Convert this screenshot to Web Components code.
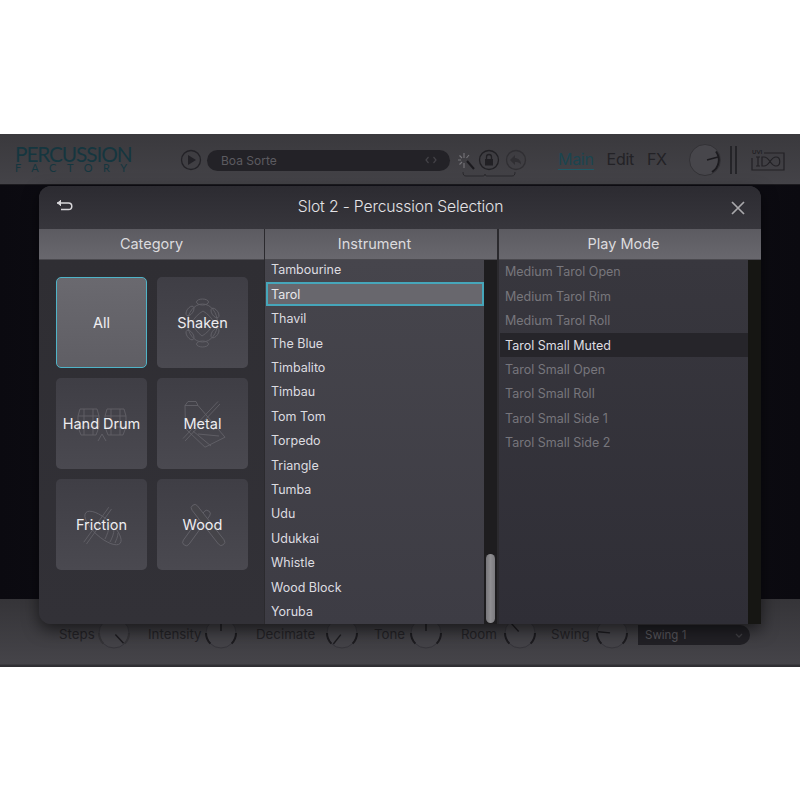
<!DOCTYPE html>
<html lang="en">
<head>
<meta charset="utf-8">
<title>Percussion Factory</title>
<style>
  html, body { margin: 0; padding: 0; background: #fff; }
  body { font-family: Inter, "Liberation Sans", sans-serif; }
</style>
</head>
<body>
<plugin-window>
  <top-bar slot="top"></top-bar>
  <bottom-bar slot="bottom">
    <knob-control label="Steps" label-w="38" angle="137" faint></knob-control>
    <knob-control label="Intensity" label-w="56" angle="0"></knob-control>
    <knob-control label="Decimate" label-w="69" angle="-142"></knob-control>
    <knob-control label="Tone" label-w="35" angle="0"></knob-control>
    <knob-control label="Room" label-w="42" angle="-42"></knob-control>
    <knob-control label="Swing" label-w="44" angle="-85"></knob-control>
    <swing-select>Swing 1</swing-select>
  </bottom-bar>
  <selection-dialog slot="dialog" heading="Slot 2 - Percussion Selection">
    <dialog-column slot="category" heading="Category" kind="category">
      <category-tile selected>All</category-tile>
      <category-tile icon="shaken">Shaken</category-tile>
      <category-tile icon="hand">Hand Drum</category-tile>
      <category-tile icon="metal">Metal</category-tile>
      <category-tile icon="friction">Friction</category-tile>
      <category-tile icon="wood">Wood</category-tile>
    </dialog-column>
    <dialog-column slot="instrument" heading="Instrument" kind="instrument" thumb>
      <list-row>Tambourine</list-row>
      <list-row outlined>Tarol</list-row>
      <list-row>Thavil</list-row>
      <list-row>The Blue</list-row>
      <list-row>Timbalito</list-row>
      <list-row>Timbau</list-row>
      <list-row>Tom Tom</list-row>
      <list-row>Torpedo</list-row>
      <list-row>Triangle</list-row>
      <list-row>Tumba</list-row>
      <list-row>Udu</list-row>
      <list-row>Udukkai</list-row>
      <list-row>Whistle</list-row>
      <list-row>Wood Block</list-row>
      <list-row>Yoruba</list-row>
    </dialog-column>
    <dialog-column slot="mode" heading="Play Mode" kind="mode">
      <list-row dim>Medium Tarol Open</list-row>
      <list-row dim>Medium Tarol Rim</list-row>
      <list-row dim>Medium Tarol Roll</list-row>
      <list-row active>Tarol Small Muted</list-row>
      <list-row dim>Tarol Small Open</list-row>
      <list-row dim>Tarol Small Roll</list-row>
      <list-row dim>Tarol Small Side 1</list-row>
      <list-row dim>Tarol Small Side 2</list-row>
    </dialog-column>
  </selection-dialog>
</plugin-window>

<script>
// main frame: the plugin behind, the dialog lies over it
class PluginWindow extends HTMLElement {
  connectedCallback() {
    this.attachShadow({ mode: 'open' });
    this.shadowRoot.innerHTML = `
      <style>
        :host { display: flex; flex-direction: column; position: relative; height: 533px; margin-top: 134px; overflow: hidden; }
        .middle { flex: 1; background: linear-gradient(90deg, #0b0a10, #14131b 50%, #0b0a10); }
        .over { position: absolute; left: 39px; top: 52px; }
      </style>
      <slot name="top"></slot>
      <div class="middle"></div>
      <slot name="bottom"></slot>
      <div class="over"><slot name="dialog"></slot></div>
    `;
  }
}

class TopBar extends HTMLElement {
  connectedCallback() {
    this.attachShadow({ mode: 'open' });
    this.shadowRoot.innerHTML = `
      <style>
        :host { display: flex; align-items: center; height: 51px; box-sizing: border-box; padding: 0 15px;
          background: linear-gradient(#3a393d, #444348); color: #1f1e22; box-shadow: inset 0 -1px #1c1b1f; }
        .logo { display: flex; flex-direction: column; flex: none; width: 118px; color: #15363f; font-family: Lato, sans-serif; margin: -3px 47px 0 0; }
        .logo b { font-weight: 400; font-size: 20.800px; line-height: 18px; white-space: nowrap; letter-spacing: -1.100px; }
        .logo i { font-style: normal; font-size: 11px; line-height: 9px; letter-spacing: 10.600px; white-space: nowrap; }
        svg { display: block; flex: none; }
        .pill { width: 243px; height: 21px; border-radius: 11px; background: #232227; margin: 1px 7px 0 5px; display: flex; align-items: center;
          justify-content: space-between; padding: 0 13px 0 14px; box-sizing: border-box; font-size: 12px; color: #5c5b60; }
        .tabs { display: flex; gap: 13px; margin-left: 31px; font-size: 16px; letter-spacing: -.3px; color: #232226; }
        .tabs span { line-height: 18px; padding-bottom: 1px; }
        .tabs span:first-child { color: #1b4550; border-bottom: 1px solid #1e5a66; }
        .vol { margin-left: auto; }
        .bars { margin-left: 8px; }
        .uvi { margin-left: 13px; }
      </style>
      <div class="logo"><b>PERCUSSION</b><i>FACTORY</i></div>
      <svg width="22" height="22" viewBox="0 0 22 22" fill="none" stroke="#232227" style="margin-top:1px">
        <circle cx="11" cy="11" r="9.500" stroke-width="1.300"/><path d="M8 6l8 5-8 5z" fill="#232227" stroke="none"/>
      </svg>
      <div class="pill"><span>Boa Sorte</span>
        <svg width="12" height="8" viewBox="0 0 12 8" fill="none" stroke="#434247" stroke-width="1.200"><path d="M3.500 1L1 4l2.500 3M8.500 1L11 4 8.500 7"/></svg>
      </div>
      <svg width="70" height="51" viewBox="0 0 70 51" fill="none">
        <path d="M10 27l7 8" stroke="#1b1a1e" stroke-width="2"/>
        <path d="M7 19v5M7 29v5M1 26h3M2.500 21.500L5 24M2.500 30.500L5 28M12 21l-2.500 3" stroke="#77767b" stroke-width="1.100"/>
        <g stroke="#212024">
          <circle cx="32" cy="26" r="9.500" stroke-width="1.300"/>
          <rect x="28" y="25" width="8" height="6.500" fill="#212024" stroke="none"/>
          <path d="M29.500 25v-2a2.500 2.500 0 015 0v2" stroke-width="1.300"/>
        </g>
        <g stroke="#302f33">
          <circle cx="59" cy="26" r="9.500" stroke-width="1.300"/>
          <path d="M58 21l-5 5 5 5v-3c2.500 0 4.500 .5 6 2.500 0-3.500-2-6-6-6.500z" fill="#302f33" stroke="none"/>
        </g>
        <path d="M6 38c0 3 1 4 3 4h17c1.500 0 2-1 2-2 0 1 .5 2 2 2h25c2 0 3-1 3-4" stroke="#29282c"/>
      </svg>
      <div class="tabs"><span>Main</span><span>Edit</span><span>FX</span></div>
      <svg class="vol" width="34" height="34" viewBox="0 0 34 34" fill="none">
        <circle cx="17" cy="17" r="15.500" fill="#47464b" stroke="#333236"/>
        <path d="M28 8.500A14 14 0 0 1 24 29" stroke="#1c1b1f" stroke-width="2"/>
        <path d="M19 17l11-3" stroke="#1c1b1f" stroke-width="1.500"/>
      </svg>
      <svg class="bars" width="8" height="28" viewBox="0 0 8 28" stroke="#1d1c20" stroke-width="1.500"><path d="M1 0v28M6 0v28"/></svg>
      <svg class="uvi" width="34" height="23" viewBox="0 0 34 23" fill="none" stroke="#222125" stroke-width="1.200">
        <path d="M1 10v12h32V5H13"/>
        <path d="M5 9h4M5 18h4M7 9v9M13 9c6 0 6 9 12 9 5 0 5-9 0-9-6 0-6 9-12 9h-2V9z"/>
        <text x="1" y="6" font-size="6" fill="#222125" stroke="none" font-family="Lato, sans-serif" font-weight="700">UVI</text>
      </svg>
    `;
  }
}

class BottomBar extends HTMLElement {
  connectedCallback() {
    this.attachShadow({ mode: 'open' });
    this.shadowRoot.innerHTML = `
      <style>
        :host { display: grid; grid-template-columns: 89px 108px 118px 87px 90px 87px 112px; align-items: start; height: 68px; box-sizing: border-box; padding: 17px 0 0 59px;
          background: linear-gradient(#353438, #454449 95%, #2f2e32 98%); }
      </style>
      <slot></slot>
    `;
  }
}

class KnobControl extends HTMLElement {
  connectedCallback() {
    const angle = Number(this.getAttribute('angle') || 0);
    const faint = this.hasAttribute('faint');
    this.attachShadow({ mode: 'open' });
    this.shadowRoot.innerHTML = `
      <style>
        :host { display: grid; grid-template-columns: ${this.getAttribute('label-w')}px 34px; align-items: center; font-size: 13.300px; color: #232226; }
        span { position: relative; top: 1px; }
        svg { display: block; }
      </style>
      <span>${this.getAttribute('label')}</span>
      <svg width="34" height="34" viewBox="0 0 34 34" fill="none">
        <circle cx="17" cy="17" r="15" fill="#434247" stroke="#35343a"/>
        <path d="M6.400 27.600A15 15 0 0 1 2 17M27.600 27.600A15 15 0 0 0 32 17" stroke="${faint ? '#343337' : '#1c1b1f'}" stroke-width="2"/>
        <path d="M17 15V3" transform="rotate(${angle} 17 17)" stroke="#1c1b1f" stroke-width="1.400"/>
      </svg>
    `;
  }
}

class SwingSelect extends HTMLElement {
  connectedCallback() {
    this.attachShadow({ mode: 'open' });
    this.shadowRoot.innerHTML = `
      <style>
        :host { display: flex; align-items: center; justify-content: space-between; width: 112px; height: 20px; box-sizing: border-box;
          padding: 0 7px 0 7px; margin-top: 9px; font-size: 11.500px; color: #57565b; background: #212025; border-radius: 0 10px 10px 0; }
      </style>
      <slot></slot>
      <svg width="8" height="5" viewBox="0 0 8 5" fill="none" stroke="#3f3e43" stroke-width="1.300"><path d="M1 1l3 3 3-3"/></svg>
    `;
  }
}

class SelectionDialog extends HTMLElement {
  connectedCallback() {
    this.attachShadow({ mode: 'open' });
    this.shadowRoot.innerHTML = `
      <style>
        :host { display: flex; flex-direction: column; width: 722px; height: 438px; border-radius: 12px 12px 0 12px; overflow: hidden;
          background: #2f2e33; color: #e6e5e8; box-shadow: 0 6px 16px rgba(0,0,0,.55); }
        header { display: grid; grid-template-columns: 1fr auto 1fr; align-items: center; flex: none; height: 43px; padding: 0 16px 0 17px; box-sizing: border-box;
          background: linear-gradient(#2c2b31, #37363c); }
        h1 { margin: 0 0 3px; font-size: 15.700px; font-weight: 300; letter-spacing: -.15px; color: #e4e3e6; }
        svg { display: block; }
        .back { margin-bottom: 3px; }
        .close { justify-self: end; }
        .cols { display: flex; flex: 1; min-height: 0; }
      </style>
      <header>
        <svg class="back" width="18" height="14" viewBox="0 0 18 14" fill="none" stroke="#d8d7da" stroke-width="1.500">
          <path d="M1 4h11.500a3.300 3.300 0 010 6.600H5"/><path d="M5 1.200L1.500 4 5 6.800" fill="#d8d7da" stroke-width="1"/>
        </svg>
        <h1>${this.getAttribute('heading')}</h1>
        <svg class="close" width="14" height="14" viewBox="0 0 14 14" stroke="#a9a8ab" stroke-width="1.700"><path d="M1 1l12 12M13 1L1 13"/></svg>
      </header>
      <div class="cols">
        <slot name="category"></slot>
        <slot name="instrument"></slot>
        <slot name="mode"></slot>
      </div>
    `;
  }
}

// one column of the dialog: grey heading, then tiles or a list with its scroll track
class DialogColumn extends HTMLElement {
  connectedCallback() {
    const kind = this.getAttribute('kind');
    this.attachShadow({ mode: 'open' });
    this.shadowRoot.innerHTML = `
      <style>
        :host { display: flex; flex-direction: column; box-sizing: border-box; min-height: 0; }
        :host([kind=category]) { width: 225px; }
        :host([kind=instrument]) { width: 235px; border-left: 1px solid #2b2a2e; border-right: 2px solid #2b2a2e; }
        :host([kind=mode]) { width: 262px; }
        h2 { flex: none; margin: 0; height: 31px; line-height: 30px; text-align: center; font-size: 14.500px; font-weight: 400; box-sizing: border-box;
          color: #dcdbde; background: linear-gradient(#5c5b61, #69686e); box-shadow: inset 0 -1px #4a494e; }
        :host([kind=instrument]) h2, :host([kind=mode]) h2 { padding-right: 13px; }
        .body { flex: 1; min-height: 0; display: flex; position: relative; }
        .tiles { flex: 1; display: grid; grid-template-columns: 91px 91px; grid-auto-rows: 91px; gap: 10px 10px; padding: 17px 0 0 17px;
          align-content: start; background: linear-gradient(#2f2e33, #323137); }
        .list { flex: 1; min-width: 0; overflow: hidden; }
        .inner { display: flex; flex-direction: column; margin-top: -2.400px; }
        :host([kind=instrument]) .list { background: linear-gradient(#46454c, #3d3c44); }
        :host([kind=instrument]) .inner { padding-left: 1px; }
        :host([kind=mode]) .list { background: linear-gradient(#38373e, #2f2e36); }
        :host([kind=mode]) .inner { margin-top: -.300px; padding-left: 1px; }
        .track { flex: none; width: 13px; background: #1e1d1f; box-sizing: border-box; padding-top: 294px; }
        :host([kind=mode]) .track { background: #161613; }
        .thumb { width: 9px; height: 69px; margin-left: 2px; border-radius: 5px; background: linear-gradient(90deg, #77767a, #8f8e91 50%, #7b7a7e); }
      </style>
      <h2>${this.getAttribute('heading')}</h2>
      <div class="body">
        ${kind === 'category'
          ? '<div class="tiles"><slot></slot></div>'
          : `<div class="list"><div class="inner"><slot></slot></div></div>
             <div class="track">${this.hasAttribute('thumb') ? '<div class="thumb"></div>' : ''}</div>`}
      </div>
    `;
  }
}

const TILE_ICONS = {
  shaken: `<ellipse cx="29.500" cy="30" rx="15" ry="19"/>
    <path d="M30 18c5 3 9 7 11 12-3 6-7 10-12 13-4-3-8-8-10-13 2-5 6-9 11-12z"/>
    <ellipse cx="29.500" cy="9" rx="6" ry="3"/><ellipse cx="29.500" cy="51" rx="6" ry="3"/>
    <ellipse cx="17" cy="18" rx="3" ry="5.500" transform="rotate(35 17 18)"/><ellipse cx="42" cy="20" rx="3" ry="5.500" transform="rotate(-35 42 20)"/>
    <ellipse cx="17" cy="42" rx="3" ry="5.500" transform="rotate(-35 17 42)"/><ellipse cx="42" cy="40" rx="3" ry="5.500" transform="rotate(35 42 40)"/>`,
  hand: `<path d="M8 15h17l2 7v11l-3 8H9l-3-8V22zM35 15h17l2 7v11l-3 8H36l-3-8V22z"/>
    <path d="M12 15v26M21 15v26M39 15v26M48 15v26M6 22h21M6 33h21M33 22h21M33 33h21M30 40l-4 7M30 40l4 7"/>`,
  metal: `<path d="M10 44.500L45 7.500M12 47l35-37"/><path d="M12 11.500l3-4h8l2 4 27 31.700-20 10-19.500-18.500zM12 11.500h13M20 37l18 15M25 40l21 2"/>`,
  friction: `<path d="M11.800 47.200L36.800 12.200M14.500 49L39.500 14"/>
    <ellipse cx="31" cy="33" rx="23" ry="9" transform="rotate(42 31 33)"/>
    <path d="M33 44c2-4 4-9 4-14M38 47c2-4 4-8 4-13M43 48c1-3 3-6 3-10"/>`,
  wood: `<rect x="-3.500" y="-21" width="7" height="42" rx="3.500" transform="translate(23.500 33) rotate(36)"/>
    <rect x="-3.500" y="-25" width="7" height="50" rx="3.500" fill="#454449" transform="translate(35 30) rotate(-38)"/>`
};

class CategoryTile extends HTMLElement {
  connectedCallback() {
    const icon = TILE_ICONS[this.getAttribute('icon')] || '';
    this.attachShadow({ mode: 'open' });
    this.shadowRoot.innerHTML = `
      <style>
        :host { display: flex; position: relative; align-items: center; justify-content: center; box-sizing: border-box; border-radius: 5px;
          font-size: 14.500px; color: #eeedf0; white-space: nowrap; background: linear-gradient(#3f3e45, #4a4950); }
        :host([selected]) { background: linear-gradient(#6a696f, #5f5e64); border: 1.500px solid #4fb4c8; color: #f0eff2; }
        svg { position: absolute; left: 15.500px; top: 15.500px; }
        span { position: relative; }
      </style>
      ${icon ? `<svg width="60" height="60" viewBox="0 0 60 60" fill="none" stroke="#626168" stroke-width=".9">${icon}</svg>` : ''}
      <span><slot></slot></span>
    `;
  }
}

class ListRow extends HTMLElement {
  connectedCallback() {
    this.attachShadow({ mode: 'open' });
    this.shadowRoot.innerHTML = `
      <style>
        :host { display: flex; align-items: center; flex: none; height: 24.420px; box-sizing: border-box; padding-left: 5px; font-size: 12.500px; color: #dddce0; }
        :host([outlined]) { background: #68676d; border: 2px solid #46a6ba; padding-left: 3px; color: #e8e7ea; }
        :host([dim]) { color: #77767c; }
        :host([active]) { background: #26252a; color: #dfdee2; }
      </style>
      <slot></slot>
    `;
  }
}

customElements.define('plugin-window', PluginWindow);
customElements.define('top-bar', TopBar);
customElements.define('bottom-bar', BottomBar);
customElements.define('knob-control', KnobControl);
customElements.define('swing-select', SwingSelect);
customElements.define('selection-dialog', SelectionDialog);
customElements.define('dialog-column', DialogColumn);
customElements.define('category-tile', CategoryTile);
customElements.define('list-row', ListRow);
</script>
</body>
</html>
